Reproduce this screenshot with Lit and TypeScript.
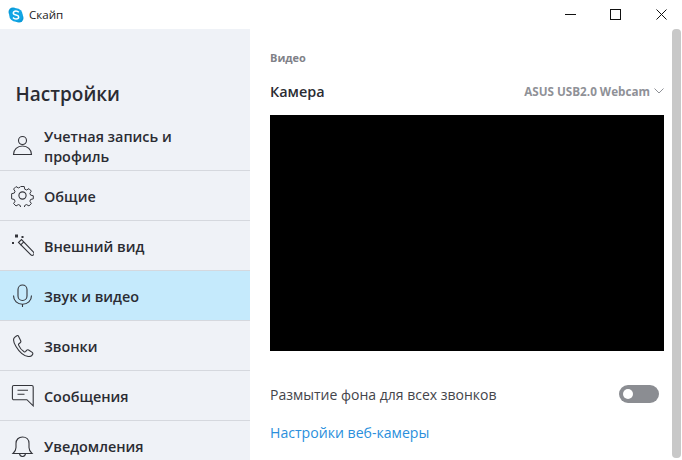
import { LitElement, html, css, svg } from "lit";
import { customElement } from "lit/decorators.js";

const icons: Record<string, unknown> = {
  user: svg`<circle cx="11.500" cy="6.500" r="4"/><path d="M2.500 20.500c0-5 4-8.500 9-8.500s9 3.500 9 8.500z"/>`,
  gear: svg`<circle cx="11.500" cy="11.500" r="3.600"/><path d="M9.600 1.500h3.800l.6 3 2 .9 2.700-1.500 2.600 2.700-1.600 2.500.8 2 3 .7v3.400l-3 .7-.8 2 1.600 2.600-2.600 2.600-2.700-1.500-2 .9-.6 3H9.600l-.7-3-2-.9-2.600 1.500-2.700-2.600 1.600-2.600-.8-2-3-.7V9.500l3-.7.8-2-1.600-2.500 2.700-2.700 2.600 1.500 2-.9z" transform="translate(1.150 1.150) scale(.9)"/>`,
  wand: svg`<path d="M7.500 8.500l3-3 12 12.700c.7.800.7 1.900 0 2.600-.8.700-1.900.700-2.600 0z"/><path d="M9.500 11.200l3.300-3.300"/><path d="M4 .5h3v3H4zM1 8h2v2H1zM10.500 2h2v2h-2z" fill="#33343a" stroke="none"/>`,
  mic: svg`<rect x="7" y="1" width="9" height="15.500" rx="4.500"/><path d="M2.500 11.500c0 5.500 4 8.800 9 8.800s9-3.300 9-8.800M11.500 20.300v3.200"/>`,
  phone: svg`<path d="M5.800 1.800L3.600 3.400C1.800 5 2.600 8.500 5 12.500c3 5 7.500 9.500 12.500 10 2.200.2 3.600-.8 4.200-2.300.3-.8.100-1.300-.5-1.800l-3.600-2.400c-.7-.4-1.300-.3-1.800.2l-1.300 1.500c-.4.400-.9.400-1.400.1-2-1.300-4.500-4.300-5.500-6.700-.2-.5-.1-1 .3-1.300l1.500-1.300c.5-.5.6-1.100.3-1.800L7.500 2.200c-.4-.7-1.100-.9-1.700-.4z"/>`,
  chat: svg`<path d="M2.800 1.500h18c.8 0 1.400.6 1.400 1.400V21.800l-6.300-6.100H2.800c-.8 0-1.400-.6-1.400-1.400V2.900c0-.8.600-1.400 1.400-1.400z"/><path d="M6.500 6.300h10.500M6.500 10.300h7"/>`,
  bell: svg`<path d="M2 19.500c2-1.800 3-3.300 3-6V9.500c0-4 2.700-6.500 6.500-6.500s6.500 2.500 6.500 6.500v4c0 2.700 1 4.200 3 6z"/><path d="M8.500 20c.4 1.700 1.500 2.500 3 2.500s2.600-.8 3-2.500"/>`,
};

const items = [
  { icon: "user", label: "Учетная запись и профиль" },
  { icon: "gear", label: "Общие" },
  { icon: "wand", label: "Внешний вид" },
  { icon: "mic", label: "Звук и видео", active: true },
  { icon: "phone", label: "Звонки" },
  { icon: "chat", label: "Сообщения" },
  { icon: "bell", label: "Уведомления" },
];

@customElement("app-root")
export class AppRoot extends LitElement {
  static styles = css`
    :host {
      display: flex;
      flex-direction: column;
      width: 682px;
      height: 460px;
      overflow: hidden;
      background: #fff;
      color: #2b2c33;
      font-family: "Open Sans", "Noto Sans", sans-serif;
    }
    .titlebar {
      flex: 0 0 29px;
      display: flex;
      align-items: center;
      background: #fff;
      overflow: hidden;
    }
    .logo { width: 16px; height: 16px; margin-left: 8px; }
    .app-name { margin-left: 5px; font-size: 11.6px; color: #1a1a1a; }
    .controls { margin-left: auto; margin-right: -2px; display: flex; align-items: center; }
    .ctl { width: 45.5px; height: 29px; display: flex; align-items: center; justify-content: center; }
    .ctl svg { width: 11px; height: 11px; fill: none; stroke: #111; stroke-width: 1; }
    .body { flex: 1; display: flex; min-height: 0; }
    .sidebar {
      flex: 0 0 250px;
      background: #eff2f7;
      overflow: hidden;
      display: flex;
      flex-direction: column;
    }
    h1 {
      flex: none;
      margin: 0;
      height: 92px;
      box-sizing: border-box;
      padding: 51px 0 0 15.5px;
      font-size: 19px;
      line-height: 28px;
      font-weight: 600;
      color: #2b2c33;
    }
    .item {
      flex: 0 0 50px;
      box-sizing: border-box;
      display: flex;
      align-items: center;
      border-bottom: 1px solid #d5d8de;
      padding-left: 11px;
      font-size: 14.4px;
      font-weight: 600;
      line-height: 20px;
    }
    .item.active { background: #c5eafc; }
    .item .icon { flex: 0 0 23px; width: 23px; height: 23px; margin-right: 10px; fill: none; stroke: #33343a; stroke-width: 1.1; }
    .item span { width: 140px; padding-top: 2px; }
    .main {
      flex: 1;
      box-sizing: border-box;
      padding: 0 8px 0 20px;
      display: flex;
      flex-direction: column;
    }
    .section { margin-top: 21px; font-size: 11px; line-height: 16px; font-weight: 700; color: #7f8188; }
    .cam-row { margin-top: 14px; height: 22px; display: flex; align-items: center; justify-content: space-between; }
    .cam-label { font-size: 14.4px; font-weight: 600; color: #2b2c33; }
    .cam-select { display: flex; align-items: center; gap: 4px; font-size: 11.7px; font-weight: 700; color: #8f9197; }
    .cam-select svg { width: 10px; height: 6px; fill: none; stroke: #8f9197; stroke-width: 1; }
    .video { margin-top: 13px; height: 236px; background: #000; }
    .blur-row { margin-top: 32px; height: 22px; display: flex; align-items: center; justify-content: space-between; padding-right: 5px; font-size: 14px; color: #44454b; }
    .toggle { width: 40px; height: 18px; border-radius: 9px; background: #8b8d92; display: flex; align-items: center; padding-left: 4px; box-sizing: border-box; }
    .toggle i { width: 10px; height: 10px; border-radius: 50%; background: #fff; }
    .link { margin-top: 17px; font-size: 14.1px; line-height: 22px; color: #2a8fdc; }
    .scroll { flex: 0 0 9px; margin-bottom: 2px; margin-right: 1px; background: #c8c8c8; border-radius: 4px; }
  `;

  render() {
    return html`
      <div class="titlebar">
        <svg class="logo" viewBox="0 0 16 16">
          <circle cx="5" cy="5" r="4.5" fill="#0a9ad8"/>
          <circle cx="11" cy="11" r="4.5" fill="#0a9ad8"/>
          <circle cx="8" cy="8" r="6.8" fill="#12a5e4"/>
          <path d="M10.800 5.300C10 4.400 9 4 7.900 4 6.400 4 5.300 4.800 5.300 6c0 2.600 5.400 1.500 5.400 4 0 1.200-1.200 2-2.700 2-1.300 0-2.300-.5-3-1.500" fill="none" stroke="#fff" stroke-width="1.5"/>
        </svg>
        <span class="app-name">Скайп</span>
        <div class="controls">
          <div class="ctl"><svg viewBox="0 0 11 11"><path d="M0 5.500h11"/></svg></div>
          <div class="ctl"><svg viewBox="0 0 11 11"><rect x=".5" y=".5" width="10" height="10"/></svg></div>
          <div class="ctl"><svg viewBox="0 0 11 11"><path d="M.5.500l10 10M10.500.500l-10 10"/></svg></div>
        </div>
      </div>
      <div class="body">
        <nav class="sidebar">
          <h1>Настройки</h1>
          ${items.map(
            (it) => html`
              <div class="item ${it.active ? "active" : ""}">
                <svg class="icon" viewBox="0 0 23 23">${icons[it.icon]}</svg>
                <span>${it.label}</span>
              </div>
            `
          )}
        </nav>
        <main class="main">
          <div class="section">Видео</div>
          <div class="cam-row">
            <span class="cam-label">Камера</span>
            <span class="cam-select">ASUS USB2.0 Webcam
              <svg viewBox="0 0 10 6"><path d="M.5.500L5 5l4.500-4.500"/></svg>
            </span>
          </div>
          <div class="video"></div>
          <div class="blur-row">
            <span>Размытие фона для всех звонков</span>
            <div class="toggle"><i></i></div>
          </div>
          <div class="link">Настройки веб-камеры</div>
        </main>
        <div class="scroll"></div>
      </div>
    `;
  }
}
